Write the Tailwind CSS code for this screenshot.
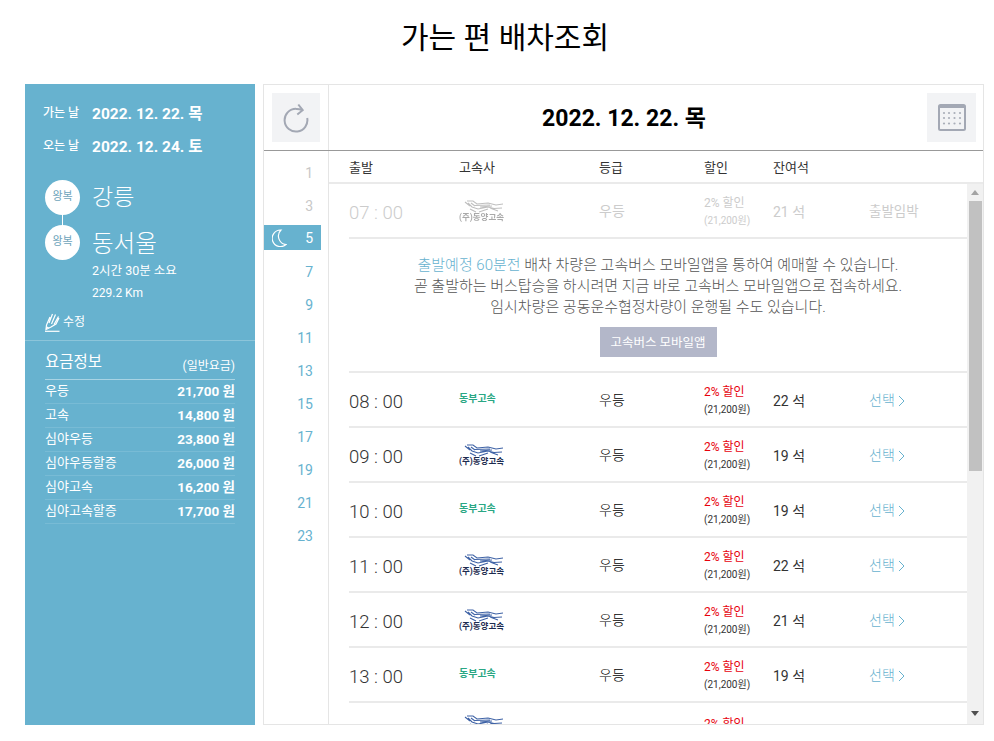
<!DOCTYPE html>
<html lang="ko">
<head>
    <meta charset="UTF-8">
    <title>가는 편 배차조회</title>
    <script src="https://cdn.jsdelivr.net/npm/@tailwindcss/browser@4"></script>
</head>
<body class="bg-white h-[741px] overflow-hidden font-['Roboto','Noto_Sans_CJK_KR',sans-serif] text-[#333]">
    <h1 class="h-[84px] pt-[16px] text-center text-[30px] leading-[44px] text-black font-normal pl-[16px]">가는 편 배차조회</h1>

    <div class="flex gap-[8px] pl-[25px] w-[984px] h-[641px]">
        <!-- left panel -->
        <aside class="w-[230px] shrink-0 bg-[#67b2cf] text-white">
            <div class="px-[18px] pt-[19px]">
                <div class="flex items-center h-[24px] gap-[8px]"><span class="text-[12px] font-medium w-[41px] -mt-[4px]">가는 날</span><b class="text-[15.5px] font-bold">2022. 12. 22. 목</b></div>
                <div class="flex items-center h-[24px] mt-[9px] gap-[8px]"><span class="text-[12px] font-medium w-[41px] -mt-[4px]">오는 날</span><b class="text-[15.5px] font-bold">2022. 12. 24. 토</b></div>
            </div>
            <div class="pl-[20px] mt-[20px] flex gap-[12px]">
                <div class="flex flex-col items-center w-[35px]">
                    <div class="w-[35px] h-[35px] rounded-full bg-white text-[#6ea4bb] text-[11px] flex items-center justify-center">왕복</div>
                    <div class="w-[1px] h-[10px] bg-white"></div>
                    <div class="w-[35px] h-[35px] rounded-full bg-white text-[#6ea4bb] text-[11px] flex items-center justify-center">왕복</div>
                </div>
                <div class="font-light pt-[2px]">
                    <div class="text-[23px] leading-[32px] h-[45px]">강릉</div>
                    <div class="text-[23.5px] leading-[34px] h-[32px]">동서울</div>
                    <div class="text-[12.5px] leading-[22px] mt-[1px] font-normal">2시간 30분 소요</div>
                    <div class="text-[12px] leading-[22px] font-normal">229.2 Km</div>
                </div>
            </div>
            <div class="pl-[20px] mt-[7px] flex items-center gap-[3px] h-[22px]">
                <svg width="15" height="20" viewBox="0 0 15 20" fill="none" stroke="white" stroke-width="1.2"><path d="M1.5 13 L1 17.5 L6 15 L11 12 L14 6 M1.5 13 L5 5 M4 11 L7.5 2 M6.5 12 L10.5 2.5 M9 12.5 L13.5 4.5 M2 15 L4 16.5"/><path d="M0 19.3 H14.5"/></svg>
                <span class="text-[12px] -mt-[1px]">수정</span>
            </div>
            <div class="mt-[7px] border-t border-[#8cc5da] px-[20px]">
                <div class="flex justify-between items-end h-[39px] border-b border-[#a9d4e4] pb-[5px]">
                    <span class="text-[15.5px] leading-[24px]">요금정보</span><span class="text-[12px] leading-[16px]">(일반요금)</span>
                </div>
                <div id="fares"></div>
            </div>
        </aside>

        <!-- right panel -->
        <main class="flex-1 border border-[#e5e5e5] flex flex-col min-w-0">
            <header class="h-[66px] flex border-b border-[#999] shrink-0">
                <div class="w-[65px] border-r border-[#e5e5e5] pl-[8px] pt-[8px]">
                    <button class="w-[48px] h-[49px] bg-[#f2f3f5] flex items-center justify-center">
                        <svg width="26" height="30" viewBox="0 0 26 30" fill="none" stroke="#a3a8b4" stroke-width="2"><path d="M13 6 Q16 5.8 19 7 M13 5.8 A11.4 11.4 0 1 0 24.2 15"/><path d="M15.3 1.5 L19.7 7.2 L14.3 11.5"/></svg>
                    </button>
                </div>
                <div class="flex-1 flex items-center justify-center text-[23px] font-bold text-black pt-[3px] pr-[8px]">2022. 12. 22. 목</div>
                <div class="pr-[7px] pt-[8px]">
                    <button class="w-[49px] h-[49px] bg-[#f2f3f5] flex items-center justify-center">
                        <svg width="28" height="27" viewBox="0 0 28 27">
                            <rect x="1" y="1" width="26" height="25" rx="1.5" fill="none" stroke="#a3a8b4" stroke-width="2"/><rect x="1" y="1" width="26" height="3" fill="#a3a8b4"/>
                            <g fill="#a9aeb9"><circle cx="6" cy="9" r="1.1"/><circle cx="11" cy="9" r="1.1"/><circle cx="16.5" cy="9" r="1.1"/><circle cx="22" cy="9" r="1.1"/><circle cx="6" cy="14" r="1.1"/><circle cx="11" cy="14" r="1.1"/><circle cx="16.5" cy="14" r="1.1"/><circle cx="22" cy="14" r="1.1"/><circle cx="6" cy="19.5" r="1.1"/><circle cx="11" cy="19.5" r="1.1"/><circle cx="16.5" cy="19.5" r="1.1"/><circle cx="22" cy="19.5" r="1.1"/></g>
                        </svg>
                    </button>
                </div>
            </header>
            <div class="flex flex-1 min-h-0">
                <!-- hours -->
                <div id="hours" class="w-[65px] shrink-0 border-r border-[#e5e5e5] pt-[4px] pr-[7px] text-[14px]"></div>
                <div class="flex-1 flex flex-col min-w-0">
                    <div class="h-[33px] shrink-0 flex items-center pl-[20px] pt-[2px] text-[13px] border-b-2 border-[#eaeaea]">
                        <span class="w-[110px]">출발</span><span class="w-[140px]">고속사</span><span class="w-[105px]">등급</span><span class="w-[69px]">할인</span><span>잔여석</span>
                    </div>
                    <div class="flex flex-1 min-h-0">
                        <div id="rows" class="flex-1 overflow-hidden pl-[20px] min-w-0"></div>
                        <div class="w-[16px] shrink-0 bg-[#f1f1f1] flex flex-col items-center">
                            <div class="h-[17px] flex items-center justify-center w-full"><div class="w-0 h-0 border-x-[4px] border-x-transparent border-b-[5px] border-b-[#a3a3a3]"></div></div>
                            <div class="w-[13px] h-[270px] bg-[#c1c1c1]"></div>
                            <div class="flex-1"></div>
                            <div class="h-[17px] flex items-center justify-center w-full mb-[2px]"><div class="w-0 h-0 border-x-[4px] border-x-transparent border-t-[5px] border-t-[#505050]"></div></div>
                        </div>
                    </div>
                </div>
            </div>
        </main>
    </div>

    <script>
        const fares = [['우등','21,700 원'],['고속','14,800 원'],['심야우등','23,800 원'],['심야우등할증','26,000 원'],['심야고속','16,200 원'],['심야고속할증','17,700 원']];
        document.getElementById('fares').innerHTML = fares.map(f => `
            <div class="flex justify-between items-center h-[24px] border-b border-[#78bbd5]"><span class="text-[13px] -mt-[2px]">${f[0]}</span><b class="text-[13.5px] font-bold">${f[1]}</b></div>
        `).join('');

        const moon = `<svg width="15" height="18" viewBox="0 0 15 18" fill="none" stroke="white" stroke-width="1.2"><path d="M9 1 A8.3 8.3 0 1 0 14 15.5 A8.5 8.5 0 0 1 9 1 Z"/></svg>`;
        document.getElementById('hours').innerHTML = [1,3,5,7,9,11,13,15,17,19,21,23].map(h => {
            if (h === 5) return `<div class="h-[25px] my-[4px] bg-[#67b2cf] text-white flex items-center justify-between pl-[8px] pr-[8px] pt-[1px]">${moon}<span>5</span></div>`;
            return `<div class="h-[33px] flex items-center justify-end pr-[8px] pt-[3px] ${h < 5 ? 'text-[#c8c8c8]' : 'text-[#67b2cf]'}">${h}</div>`;
        }).join('');

        const dongyang = (muted) => `
            <div class="w-[50px] flex flex-col items-start ${muted ? 'opacity-40 grayscale' : ''}">
                <svg class="ml-[4px]" width="42" height="13" viewBox="0 0 42 13" fill="none" stroke="#3f63a6" stroke-width="1.1"><path d="M4 1 L10 1 L14 4 L25 3 L33 5 L40 4 M5 3 L9 7 L15 9 L25 7 L31 8.5 L39 8 M2 2 L7 6 M12 5.5 L27 5 M8 3 L12 6 M16 12 L25 9 M7 9 L13 12 M27 8 L35 11 M17 7 L29 6"/></svg>
                <span class="text-[8.5px] leading-[9px] font-bold text-[#1d2c50] whitespace-nowrap">(주)동양고속</span>
            </div>`;
        const dongbu = `<span class="block text-[10px] font-bold text-[#2aa784] -mt-[2px]">동부고속</span>`;

        const row = (time, logo, seats) => `
            <div class="h-[55px] flex items-center border-b-2 border-[#eaeaea]">
                <span class="w-[110px] text-[18.5px] font-light pt-[6px]">${time}</span>
                <span class="w-[140px]">${logo}</span>
                <span class="w-[105px] text-[14px] text-black font-light pt-[2px]">우등</span>
                <span class="w-[69px] leading-[18px] pt-[3px]"><span class="block text-[12px] text-red-600">2% 할인</span><span class="block text-[10px] text-[#333]">(21,200원)</span></span>
                <span class="w-[96px] text-[14px] pt-[3px]">${seats} 석</span>
                <span class="text-[14px] text-[#67b2cf] flex items-center gap-[3px] pt-[2px] font-light">선택 <svg width="7" height="12" viewBox="0 0 7 12" fill="none" stroke="#67b2cf"><path d="M1 1 L6 6 L1 11"/></svg></span>
            </div>`;

        document.getElementById('rows').innerHTML = `
            <div class="h-[55px] flex items-center border-b-2 border-[#eaeaea] text-[#ccc]">
                <span class="w-[110px] text-[18.5px] font-light pt-[6px]">07 : 00</span>
                <span class="w-[140px]">${dongyang(true)}</span>
                <span class="w-[105px] text-[14px] pt-[2px]">우등</span>
                <span class="w-[69px] leading-[18px] pt-[3px]"><span class="block text-[12px]">2% 할인</span><span class="block text-[10px]">(21,200원)</span></span>
                <span class="w-[96px] text-[14px] pt-[3px]">21 석</span>
                <span class="text-[13.5px] pt-[2px]">출발임박</span>
            </div>
            <div class="h-[134px] border-b-2 border-[#eaeaea] text-center text-[15px] text-[#555] font-light leading-[21px] pt-[16px]">
                <p><span class="text-[#67b2cf]">출발예정 60분전</span> 배차 차량은 고속버스 모바일앱을 통하여 예매할 수 있습니다.</p>
                <p>곧 출발하는 버스탑승을 하시려면 지금 바로 고속버스 모바일앱으로 접속하세요.</p>
                <p>임시차량은 공동운수협정차량이 운행될 수도 있습니다.</p>
                <button class="mt-[9px] w-[117px] h-[30px] bg-[#b3b7c9] text-white text-[12.5px] font-normal">고속버스 모바일앱</button>
            </div>
            ${row('08 : 00', dongbu, 22)}
            ${row('09 : 00', dongyang(false), 19)}
            ${row('10 : 00', dongbu, 19)}
            ${row('11 : 00', dongyang(false), 22)}
            ${row('12 : 00', dongyang(false), 21)}
            ${row('13 : 00', dongbu, 19)}
            <div class="h-[55px] flex items-start pt-[12px]">
                <span class="w-[250px] pl-[110px]">${dongyang(false)}</span>
                <span class="pl-[105px] text-[12px] text-red-600">2% 할인</span>
            </div>
        `;
    </script>
</body>
</html>
